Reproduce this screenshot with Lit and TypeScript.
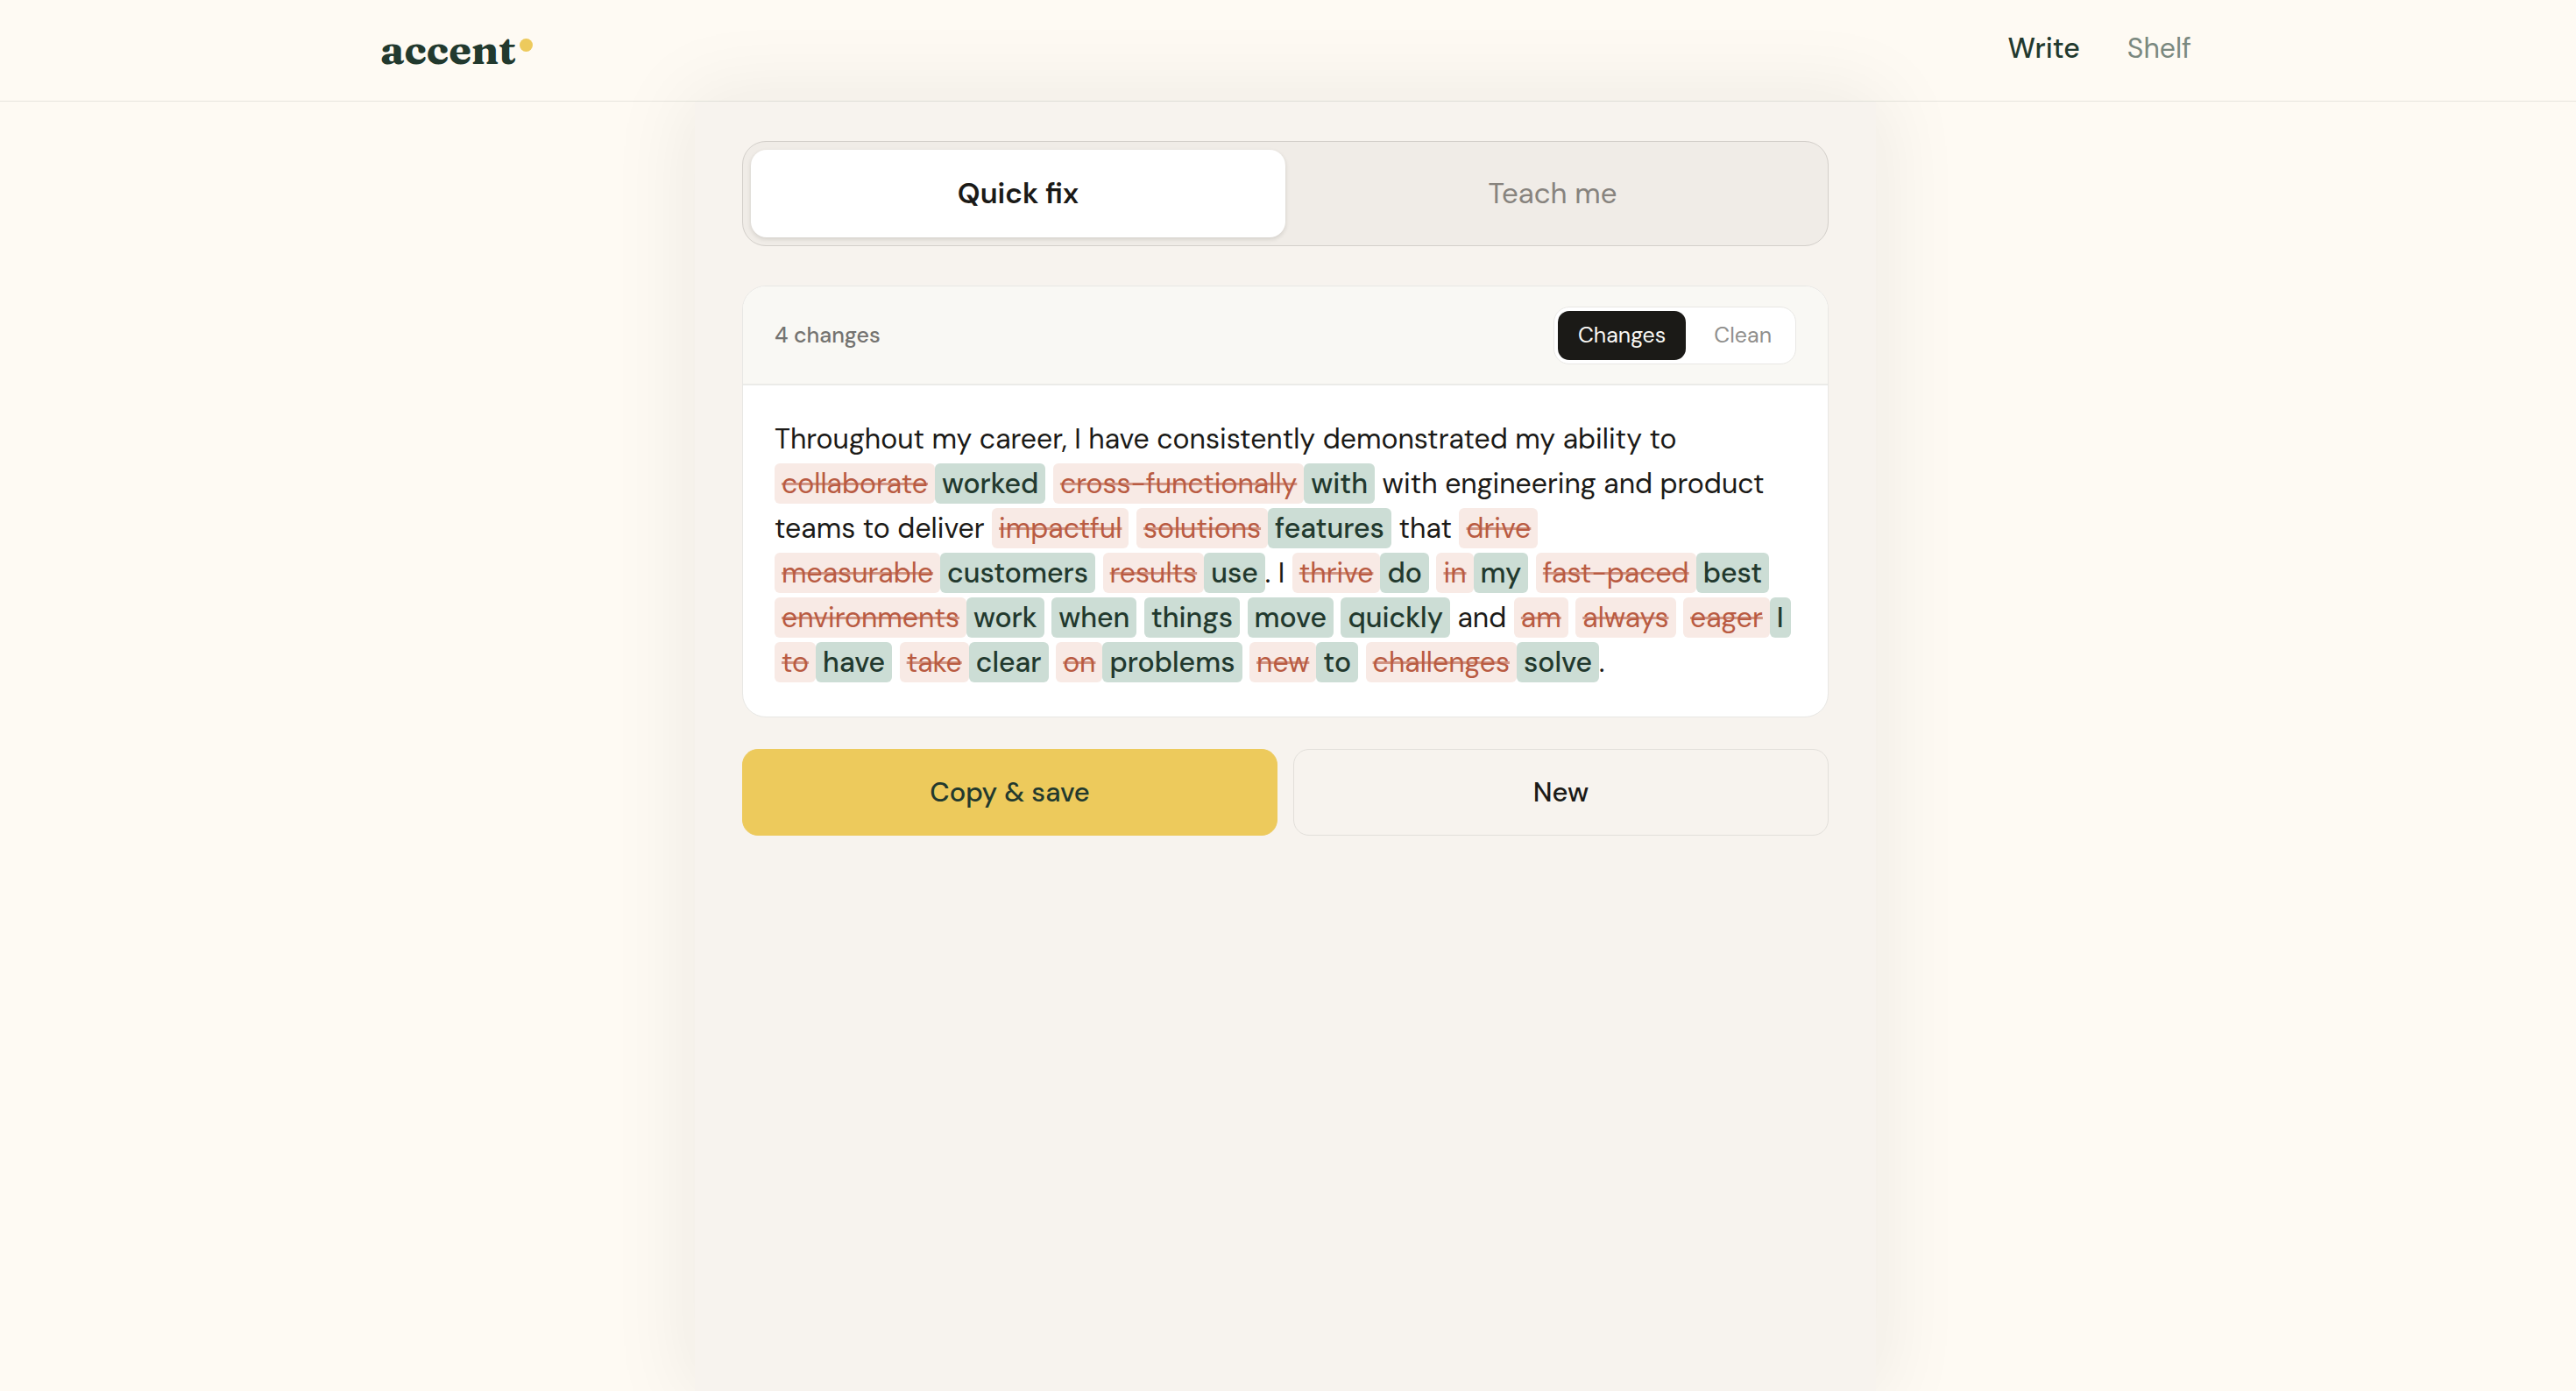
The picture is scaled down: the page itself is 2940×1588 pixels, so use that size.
import { LitElement, html, css } from "lit";
import { customElement, state } from "lit/decorators.js";
import { classMap } from "lit/directives/class-map.js";

type Kind = "keep" | "del" | "ins";
type Segment = [Kind, string];

const SEGMENTS: Segment[] = [
  ["keep", "Throughout my career, I have consistently demonstrated my ability to "],
  ["del", "collaborate"],
  ["ins", "worked"],
  ["keep", " "],
  ["del", "cross-functionally"],
  ["ins", "with"],
  ["keep", " with engineering and product teams to deliver "],
  ["del", "impactful"],
  ["keep", " "],
  ["del", "solutions"],
  ["ins", "features"],
  ["keep", " that "],
  ["del", "drive"],
  ["keep", " "],
  ["del", "measurable"],
  ["ins", "customers"],
  ["keep", " "],
  ["del", "results"],
  ["ins", "use"],
  ["keep", ". I "],
  ["del", "thrive"],
  ["ins", "do"],
  ["keep", " "],
  ["del", "in"],
  ["ins", "my"],
  ["keep", " "],
  ["del", "fast-paced"],
  ["ins", "best"],
  ["keep", " "],
  ["del", "environments"],
  ["ins", "work"],
  ["keep", " "],
  ["ins", "when"],
  ["keep", " "],
  ["ins", "things"],
  ["keep", " "],
  ["ins", "move"],
  ["keep", " "],
  ["ins", "quickly"],
  ["keep", " and "],
  ["del", "am"],
  ["keep", " "],
  ["del", "always"],
  ["keep", " "],
  ["del", "eager"],
  ["ins", "I"],
  ["keep", " "],
  ["del", "to"],
  ["ins", "have"],
  ["keep", " "],
  ["del", "take"],
  ["ins", "clear"],
  ["keep", " "],
  ["del", "on"],
  ["ins", "problems"],
  ["keep", " "],
  ["del", "new"],
  ["ins", "to"],
  ["keep", " "],
  ["del", "challenges"],
  ["ins", "solve"],
  ["keep", "."],
];

@customElement("app-root")
export class AppRoot extends LitElement {
  static styles = css`
    :host {
      --ink: #1b1a17;
      --forest: #22392e;
      --gold: #edca5c;
      --line: #e8e7e4;
      display: flex;
      flex-direction: column;
      min-height: 100vh;
      background: #fefaf3;
      color: var(--ink);
      font-family: "DM Sans", Inter, sans-serif;
      font-size: 32px;
      line-height: 40px;
    }
    * {
      box-sizing: border-box;
    }
    button {
      margin: 0;
      border: 0;
      background: none;
      color: inherit;
      font: inherit;
      cursor: pointer;
    }

    .header {
      position: relative;
      z-index: 1;
      border-bottom: 1px solid rgba(34, 57, 46, 0.1);
      padding-right: 6px;
    }
    .header-inner {
      display: flex;
      align-items: center;
      justify-content: space-between;
      max-width: 2160px;
      height: 115px;
      margin: 0 auto;
      padding: 0 46px 0 47px;
    }
    .logo {
      display: flex;
      align-items: flex-start;
      gap: 4px;
      padding-bottom: 4px;
      color: var(--forest);
      font-family: Fraunces, "Liberation Serif", serif;
      font-size: 47px;
      font-weight: 700;
      line-height: 58px;
      text-decoration: none;
    }
    .dot {
      width: 15px;
      height: 15px;
      margin-top: 17px;
      border-radius: 50%;
      background: var(--gold);
    }
    .nav {
      display: flex;
      gap: 54px;
      padding-bottom: 6px;
    }
    .nav-link {
      color: #7a887f;
      text-decoration: none;
    }
    .nav-link.active {
      color: var(--forest);
      font-weight: 500;
    }

    .main {
      display: flex;
      flex: 1;
      justify-content: center;
      padding-right: 6px;
    }
    .panel {
      flex: 1;
      max-width: 1348px;
      padding: 45px 54px;
      background: #f7f3ee;
      box-shadow: 0 0 90px 8px rgba(27, 26, 30, 0.07);
    }

    .modes {
      display: flex;
      margin-bottom: 45px;
      padding: 9px;
      border: 1px solid #d3cfca;
      border-radius: 27px;
      background: #f0ece7;
    }
    .mode {
      flex: 1;
      height: 100px;
      border-radius: 18px;
      color: #87837e;
      font-size: 33px;
    }
    .mode.active {
      background: #fff;
      box-shadow: 0 2px 5px rgba(27, 26, 23, 0.14);
      color: var(--ink);
      font-weight: 600;
    }

    .card {
      overflow: hidden;
      margin-bottom: 36px;
      border: 1px solid var(--line);
      border-radius: 27px;
      background: #fff;
    }
    .card-head {
      display: flex;
      align-items: center;
      justify-content: space-between;
      padding: 23px 36px 22px;
      border-bottom: 2px solid #ebebe8;
      background: #f9f8f4;
    }
    .count {
      color: #747370;
      font-size: 25px;
      font-weight: 500;
    }
    .views {
      display: flex;
      gap: 9px;
      padding: 4px;
      border: 1px solid var(--line);
      border-radius: 18px;
      background: #fff;
    }
    .view {
      height: 56px;
      padding: 0 23px;
      border-radius: 13px;
      color: #908f8d;
      font-size: 25px;
    }
    .view.active {
      background: var(--ink);
      color: #f9f8f4;
    }

    .text {
      margin: 0;
      padding: 36px;
      line-height: 51px;
    }
    .del,
    .ins {
      padding: 2px 8px;
      border-radius: 6px;
      white-space: nowrap;
    }
    .del {
      background: #f8eae5;
      color: #b95b42;
      text-decoration: line-through 3px rgba(185, 91, 66, 0.6);
    }
    .ins {
      background: #ccddd5;
      color: var(--forest);
      font-weight: 500;
      text-decoration: none;
    }

    .actions {
      display: grid;
      grid-template-columns: 1fr 1fr;
      gap: 18px;
    }
    .action {
      height: 99px;
      border: 1px solid #e2dfda;
      border-radius: 18px;
      font-size: 31px;
      font-weight: 500;
    }
    .action.primary {
      border-color: var(--gold);
      background: var(--gold);
      color: var(--forest);
    }
  `;

  @state() private mode = "Quick fix";
  @state() private view = "Changes";

  private renderSegment([kind, text]: Segment) {
    if (kind === "del") return html`<del class="del">${text}</del>`;
    if (kind === "ins") return html`<ins class="ins">${text}</ins>`;
    return text;
  }

  private get segments() {
    return this.view === "Clean" ? SEGMENTS.filter(([kind]) => kind !== "del") : SEGMENTS;
  }

  render() {
    return html`
      <header class="header">
        <div class="header-inner">
          <a class="logo" href="#"><span>accent</span><span class="dot"></span></a>
          <nav class="nav">
            <a class="nav-link active" href="#write">Write</a>
            <a class="nav-link" href="#shelf">Shelf</a>
          </nav>
        </div>
      </header>
      <main class="main">
        <div class="panel">
          <div class="modes">
            ${["Quick fix", "Teach me"].map(
              (name) => html`<button
                class=${classMap({ mode: true, active: this.mode === name })}
                aria-pressed=${this.mode === name}
                @click=${() => (this.mode = name)}
              >
                ${name}
              </button>`
            )}
          </div>
          <section class="card">
            <div class="card-head">
              <span class="count">4 changes</span>
              <div class="views">
                ${["Changes", "Clean"].map(
                  (name) => html`<button
                    class=${classMap({ view: true, active: this.view === name })}
                    aria-pressed=${this.view === name}
                    @click=${() => (this.view = name)}
                  >
                    ${name}
                  </button>`
                )}
              </div>
            </div>
            <p class="text">${this.segments.map((segment) => this.renderSegment(segment))}</p>
          </section>
          <div class="actions">
            <button class="action primary">Copy &amp; save</button>
            <button class="action">New</button>
          </div>
        </div>
      </main>
    `;
  }
}
